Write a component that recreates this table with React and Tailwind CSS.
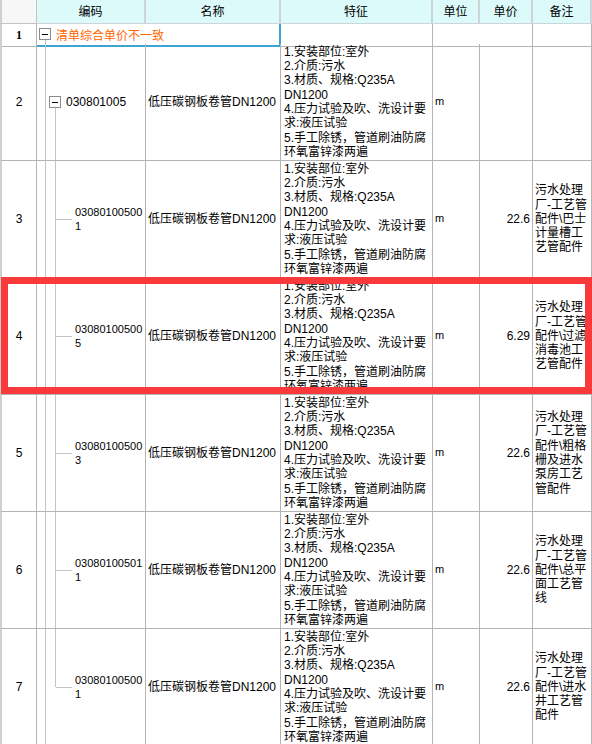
import React from 'react';

const COLS = 'grid grid-cols-[37px_109px_135px_152px_47px_53px_59px]';
const FONT = { fontFamily: '"Liberation Sans", "Noto Sans CJK SC", sans-serif' };

const FEATURES = [
  '1.安装部位:室外',
  '2.介质:污水',
  '3.材质、规格:Q235A',
  'DN1200',
  '4.压力试验及吹、洗设计要',
  '求:液压试验',
  '5.手工除锈，管道刷油防腐',
  '环氧富锌漆两遍',
];

const ROWS = [
  { no: 3, code: ['03080100500', '1'], price: '22.6', note: ['污水处理', '厂-工艺管', '配件\\巴士', '计量槽工', '艺管配件'] },
  { no: 4, code: ['03080100500', '5'], price: '6.29', note: ['污水处理', '厂-工艺管', '配件\\过滤', '消毒池工', '艺管配件'] },
  { no: 5, code: ['03080100500', '3'], price: '22.6', note: ['污水处理', '厂-工艺管', '配件\\粗格', '栅及进水', '泵房工艺', '管配件'] },
  { no: 6, code: ['03080100501', '1'], price: '22.6', note: ['污水处理', '厂-工艺管', '配件\\总平', '面工艺管', '线'] },
  { no: 7, code: ['03080100500', '1'], price: '22.6', note: ['污水处理', '厂-工艺管', '配件\\进水', '井工艺管', '配件'], last: true },
];

const cell = 'border-r border-b border-[#b4b4b4]';

const Toggle = () => (
  <div className="w-[12px] h-[12px] border border-[#8c8c8c] bg-white flex items-center justify-center shrink-0">
    <div className="w-[6px] h-px bg-black" />
  </div>
);

const Lines = ({ items, className = '' }) => (
  <div className={`flex flex-col leading-[14.3px] whitespace-nowrap ${className}`}>
    {items.map((t, i) => (
      <span key={i}>{t}</span>
    ))}
  </div>
);

function RowNo({ n, bold }) {
  return (
    <div className={`${cell} border-l-2 border-l-[#d0d0d0] flex items-center justify-center text-[12px] ${bold ? 'font-bold' : ''}`}
      style={bold ? { fontFamily: '"Liberation Serif", serif' } : undefined}>
      {n}
    </div>
  );
}

function TailCells({ price, note }) {
  return (
    <>
      <div className={`${cell} flex items-center pl-[3px] text-[12px]`}>
        <Lines items={FEATURES} />
      </div>
      <div className={`${cell} flex items-center pl-[2px] text-[11px] pb-[2px]`}>m</div>
      <div className={`${cell} flex items-center justify-end pr-[2px] text-[12px]`}>{price}</div>
      <div className={`${cell} flex items-center pl-[2px] text-[12px] overflow-hidden`}>
        {note && <Lines items={note} />}
      </div>
    </>
  );
}

function ItemRow({ row }) {
  return (
    <div className={`${COLS} h-[117px]`}>
      <RowNo n={row.no} />
      <div className={`${cell} flex items-stretch`}>
        <div className="w-[8px]" />
        <div className="w-px bg-[#c4c4c4]" />
        <div className="w-[9px]" />
        <div className="w-px flex flex-col">
          <div className="flex-1 bg-[#c4c4c4]" />
          <div className={`flex-1 ${row.last ? '' : 'bg-[#c4c4c4]'}`} />
        </div>
        <div className="w-[16px] flex items-center">
          <div className="w-full h-px bg-[#c4c4c4]" />
        </div>
        <div className="flex items-center pl-[3px] text-[11px]">
          <Lines items={row.code} />
        </div>
      </div>
      <div className={`${cell} flex items-center pl-[2px] text-[12px] whitespace-nowrap`}>低压碳钢板卷管DN1200</div>
      <TailCells price={row.price} note={row.note} />
    </div>
  );
}

export default function App() {
  const headers = ['编码', '名称', '特征', '单位', '单价', '备注'];
  return (
    <div className="relative w-[592px] h-[744px] overflow-hidden bg-white text-black" style={FONT}>
      {/* header */}
      <div className={`${COLS} h-[24px]`}>
        <div className="border-l-2 border-l-[#d0d0d0] border-r border-b border-[#c4c4c4] bg-[#f7f7f7]" />
        {headers.map((h) => (
          <div key={h} className="bg-[#dcfafa] border-r-2 border-b border-[#cdd6d6] flex items-center justify-center text-[12px]">
            {h}
          </div>
        ))}
      </div>

      {/* group row */}
      <div className={`${COLS} h-[20px]`}>
        <RowNo n={1} bold />
        <div className="col-span-2 border-b-2 border-r-2 border-[#3ea4d2] flex items-stretch">
          <div className="w-[2px]" />
          <div className="flex flex-col items-center pt-[4px]">
            <Toggle />
            <div className="flex-1 w-px bg-[#c4c4c4]" />
          </div>
          <div className="pl-[5px] pt-[3px] text-[12px] text-[#ff6600] whitespace-nowrap">清单综合单价不一致</div>
        </div>
        <div className={cell} />
        <div className={`${cell} col-span-2`} />
        <div className={cell} />
      </div>

      {/* code row */}
      <div className={`${COLS} h-[117px]`}>
        <RowNo n={2} />
        <div className={`${cell} flex items-stretch`}>
          <div className="w-[8px]" />
          <div className="w-px bg-[#c4c4c4]" />
          <div className="w-[3px]" />
          <div className="w-[12px] flex flex-col items-center">
            <div className="flex-1" />
            <Toggle />
            <div className="flex-1 w-px bg-[#c4c4c4]" />
          </div>
          <div className="flex items-center pl-[5px] text-[12px]">030801005</div>
        </div>
        <div className={`${cell} flex items-center pl-[2px] text-[12px] whitespace-nowrap`}>低压碳钢板卷管DN1200</div>
        <TailCells price="" note={null} />
      </div>

      {ROWS.map((r) => (
        <ItemRow key={r.no} row={r} />
      ))}

      {/* highlight frame */}
      <div className="absolute left-[1px] right-0 top-[277px] h-[117px] border-[7px] border-[#fa3a3a] pointer-events-none" />
    </div>
  );
}
